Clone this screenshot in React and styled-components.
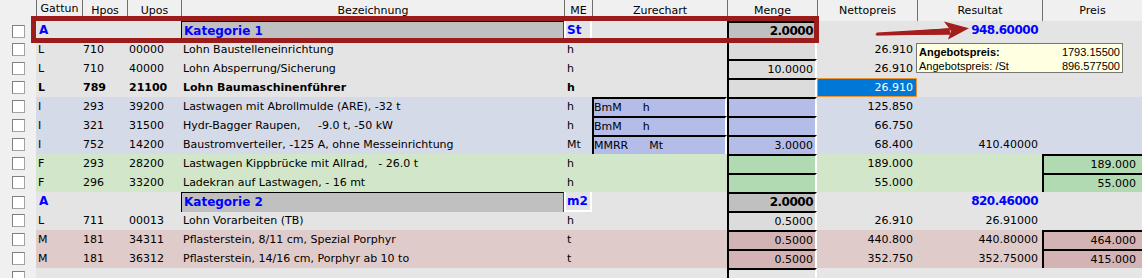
import React from 'react';
import styled, { createGlobalStyle, css } from 'styled-components';

const GlobalStyle = createGlobalStyle`
  html, body { margin: 0; padding: 0; background: #f0f0f0; }
  body {
    font-family: "DejaVu Sans", Verdana, sans-serif;
    font-size: 11px;
    color: #000;
  }
`;

const COLS = '36px 46px 45px 54px 383px 28px 135px 90px 100px 125px 100px';

const TONES = {
  A: { row: '#e4e4e4', box: '#c0c0c0' },
  L: { row: '#e4e4e4', box: '#dcdcdc' },
  I: { row: '#d5dae8', box: '#b4bce8' },
  F: { row: '#d2e7c9', box: '#b2dab2' },
  M: { row: '#e0cbcb', box: '#d3b3b3' },
  E: { row: '#e6e6e6', box: '#e6e6e6' },
};

const accent = css`
  ${(p) =>
    p.$accent &&
    css`
      font-weight: bold;
      font-size: 12px;
      color: ${p.$accent === 'blue' ? '#0000ff' : '#000'};
    `}
  ${(p) => p.$tight && css`letter-spacing: -0.5px;`}
`;

const Sheet = styled.div`
  position: relative;
  width: 1142px;
  height: 278px;
  overflow: hidden;
  background: #f0f0f0;
`;

const HeaderRow = styled.div`
  display: grid;
  grid-template-columns: ${COLS};
  height: 21px;
  background: #f0f0f0;
`;

const HeadCell = styled.div`
  border-left: ${(p) => (p.$first ? 'none' : '1px solid #6f6f6f')};
  text-align: center;
  line-height: ${(p) => (p.$raised ? '18px' : '22px')};
  white-space: nowrap;
  overflow: hidden;
`;

const Row = styled.div`
  display: grid;
  grid-template-columns: ${COLS};
  height: 19px;
  background: ${(p) => TONES[p.$tone].row};
  font-weight: ${(p) => (p.$bold ? 'bold' : 'normal')};
`;

const CheckCell = styled.div`
  background: #f0f0f0;
  display: flex;
  align-items: center;
  padding-left: 12px;
`;

const CheckBox = styled.span`
  width: 13px;
  height: 13px;
  box-sizing: border-box;
  background: #fff;
  border: 1px solid #a3a3a3;
  border-top-color: #808080;
  border-left-color: #808080;
`;

const Text = styled.div`
  padding-left: ${(p) => p.$pad ?? 2}px;
  line-height: 19px;
  white-space: pre;
  overflow: hidden;
  ${accent}
`;

const CatTitle = styled.div`
  box-sizing: border-box;
  background: #c0c0c0;
  border-top: 1px solid #000;
  border-left: 1px solid #000;
  border-right: 1px solid #4a4a4a;
  padding-left: 2px;
  line-height: 18px;
  white-space: pre;
  ${accent}
`;

const CatUnit = styled.div`
  box-sizing: border-box;
  border-left: 2px solid #fff;
  border-right: 2px solid #fff;
  border-bottom: 2px solid #fff;
  padding-left: 1px;
  line-height: 18px;
  ${accent}
`;

const Num = styled.div`
  text-align: right;
  padding-right: ${(p) => p.$pad}px;
  line-height: 19px;
  white-space: nowrap;
  ${accent}
`;

const Field = styled.div`
  box-sizing: border-box;
  height: 19px;
  background: ${(p) => p.$fill};
  border-top: 2px solid #000;
  border-left: 2px solid #000;
  border-right: ${(p) => (p.$edge ? 'none' : '2px solid #fff')};
  line-height: 17px;
  white-space: nowrap;
  overflow: hidden;
  text-align: ${(p) => (p.$num ? 'right' : 'left')};
  padding-right: ${(p) => p.$pad ?? 0}px;
  display: ${(p) => (p.$num ? 'block' : 'flex')};
  ${accent}
`;

const ZuCode = styled.span`
  margin-right: 21px;
`;

const Selected = styled.div`
  box-sizing: border-box;
  background: #0078d7;
  border: 1px solid #f0922e;
  color: #fff;
  font-weight: normal;
  text-align: right;
  padding-right: 3px;
  line-height: 17px;
`;

const Frame = styled.div`
  position: absolute;
  left: 31px;
  top: 16px;
  width: 788px;
  height: 27px;
  box-sizing: border-box;
  border: 5px solid #9c1b1b;
  pointer-events: none;
`;

const ArrowMark = styled.svg`
  position: absolute;
  left: 870px;
  top: 18px;
  width: 104px;
  height: 26px;
  overflow: visible;
`;

const Tip = styled.div`
  position: absolute;
  left: 916px;
  top: 43px;
  width: 207px;
  height: 30px;
  box-sizing: border-box;
  background: #ffffe1;
  border: 1px solid #767676;
  padding: 1px 2px 0 2px;
  font-family: "Liberation Sans", Arial, sans-serif;
  font-size: 11px;
  color: #000;
`;

const TipLine = styled.div`
  display: flex;
  justify-content: space-between;
  line-height: 14px;
`;

const TipLabel = styled.span`
  font-weight: ${(p) => (p.$bold ? 'bold' : 'normal')};
`;

const HEADERS = ['', 'Gattun', 'Hpos', 'Upos', 'Bezeichnung', 'ME', 'Zurechart', 'Menge', 'Nettopreis', 'Resultat', 'Preis'];

const ROWS = [
  { t: 'A', g: 'A', bez: 'Kategorie 1', me: 'St', menge: '2.0000', res: '948.60000' },
  { t: 'L', g: 'L', h: '710', u: '00000', bez: 'Lohn Baustelleneinrichtung', me: 'h', menge: '', netto: '26.910' },
  { t: 'L', g: 'L', h: '710', u: '40000', bez: 'Lohn Absperrung/Sicherung', me: 'h', menge: '10.0000', netto: '26.910' },
  { t: 'L', bold: true, g: 'L', h: '789', u: '21100', bez: 'Lohn Baumaschinenführer', me: 'h', menge: '', netto: '26.910', selected: true },
  { t: 'I', g: 'I', h: '293', u: '39200', bez: 'Lastwagen mit Abrollmulde (ARE), -32 t', me: 'h', zu: ['BmM', 'h'], menge: '', netto: '125.850' },
  { t: 'I', g: 'I', h: '321', u: '31500', bez: 'Hydr-Bagger Raupen,     -9.0 t, -50 kW', me: 'h', zu: ['BmM', 'h'], menge: '', netto: '66.750' },
  { t: 'I', g: 'I', h: '752', u: '14200', bez: 'Baustromverteiler, -125 A, ohne Messeinrichtung', me: 'Mt', zu: ['MMRR', 'Mt'], menge: '3.0000', netto: '68.400', res: '410.40000' },
  { t: 'F', g: 'F', h: '293', u: '28200', bez: 'Lastwagen Kippbrücke mit Allrad,   - 26.0 t', me: 'h', menge: '', netto: '189.000', preis: '189.000' },
  { t: 'F', g: 'F', h: '296', u: '33200', bez: 'Ladekran auf Lastwagen, - 16 mt', me: 'h', menge: '', netto: '55.000', preis: '55.000' },
  { t: 'A', g: 'A', bez: 'Kategorie 2', me: 'm2', menge: '2.0000', res: '820.46000' },
  { t: 'L', g: 'L', h: '711', u: '00013', bez: 'Lohn Vorarbeiten (TB)', me: 'h', menge: '0.5000', netto: '26.910', res: '26.91000' },
  { t: 'M', g: 'M', h: '181', u: '34311', bez: 'Pflasterstein, 8/11 cm, Spezial Porphyr', me: 't', menge: '0.5000', netto: '440.800', res: '440.80000', preis: '464.000' },
  { t: 'M', g: 'M', h: '181', u: '36312', bez: 'Pflasterstein, 14/16 cm, Porphyr ab 10 to', me: 't', menge: '0.5000', netto: '352.750', res: '352.75000', preis: '415.000' },
  { t: 'E' },
];

function GridRow({ r }) {
  const tone = TONES[r.t];
  const cat = r.t === 'A';
  return (
    <Row $tone={r.t} $bold={r.bold}>
      <CheckCell>
        <CheckBox />
      </CheckCell>
      <Text $pad={cat ? 3 : 2} $accent={cat ? 'blue' : undefined}>{r.g || ''}</Text>
      <Text $pad={1}>{r.h || ''}</Text>
      <Text>{r.u || ''}</Text>
      {cat ? <CatTitle $accent="blue">{r.bez}</CatTitle> : <Text>{r.bez || ''}</Text>}
      {cat ? <CatUnit $accent="blue">{r.me}</CatUnit> : <Text $pad={3}>{r.me || ''}</Text>}
      {r.zu ? (
        <Field $fill={tone.box}>
          <ZuCode>{r.zu[0]}</ZuCode>
          <span>{r.zu[1]}</span>
        </Field>
      ) : (
        <Text />
      )}
      <Field $fill={tone.box} $num $pad={2} $accent={cat ? 'black' : undefined} $tight={cat}>
        {r.menge || ''}
      </Field>
      {r.selected ? <Selected>{r.netto}</Selected> : <Num $pad={4}>{r.netto || ''}</Num>}
      <Num $pad={4} $accent={cat ? 'blue' : undefined} $tight={cat}>
        {r.res || ''}
      </Num>
      {r.preis ? (
        <Field $fill={tone.box} $num $edge $pad={6}>
          {r.preis}
        </Field>
      ) : (
        <Num $pad={6} />
      )}
    </Row>
  );
}

export default function App() {
  return (
    <>
      <GlobalStyle />
      <Sheet>
        <HeaderRow>
          {HEADERS.map((h, i) => (
            <HeadCell key={i} $first={i === 0} $raised={h === 'Gattun'}>
              {h}
            </HeadCell>
          ))}
        </HeaderRow>
        {ROWS.map((r, i) => (
          <GridRow key={i} r={r} />
        ))}
        <Frame />
        <ArrowMark viewBox="0 0 104 26">
          <path d="M6 15.8 Q5 16.6 6 17.2 L80 16.4 L79.5 10.2 Z" fill="#a51d1d" />
          <path d="M7 14.6 L79.5 10.2 L80 16.4 L7 17.6 Q5 16.2 7 14.6 Z" fill="#a51d1d" />
          <polygon points="74,3.5 99,10.2 78,21.5 81,13" fill="#a51d1d" />
        </ArrowMark>
        <Tip>
          <TipLine>
            <TipLabel $bold>Angebotspreis:</TipLabel>
            <span>1793.15500</span>
          </TipLine>
          <TipLine>
            <TipLabel>Angebotspreis: /St</TipLabel>
            <span>896.577500</span>
          </TipLine>
        </Tip>
      </Sheet>
    </>
  );
}
